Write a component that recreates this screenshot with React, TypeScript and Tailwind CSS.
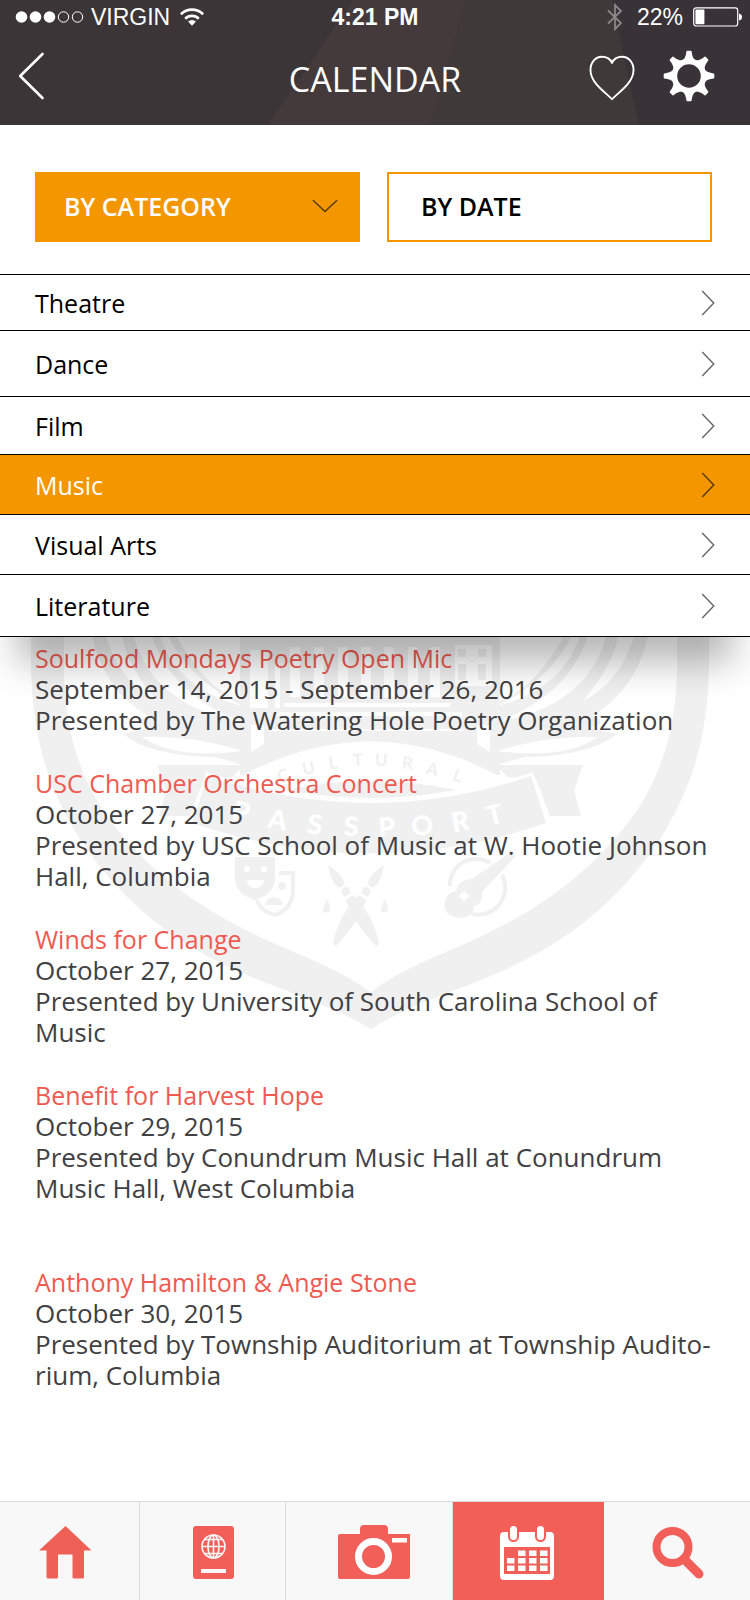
import type { ReactNode } from "react";

type Category = { name: string; height: string };

const categories: Category[] = [
  { name: "Theatre", height: "h-14" },
  { name: "Dance", height: "h-[66px]" },
  { name: "Film", height: "h-[58px]" },
  { name: "Music", height: "h-[60px]" },
  { name: "Visual Arts", height: "h-[60px]" },
  { name: "Literature", height: "h-[62px]" },
];

const events = [
  {
    title: "Soulfood Mondays Poetry Open Mic",
    date: "September 14, 2015 - September 26, 2016",
    lines: ["Presented by The Watering Hole Poetry Organization"],
  },
  {
    title: "USC Chamber Orchestra Concert",
    date: "October 27, 2015",
    lines: ["Presented by USC School of Music at W. Hootie Johnson", "Hall, Columbia"],
  },
  {
    title: "Winds for Change",
    date: "October 27, 2015",
    lines: ["Presented by University of South Carolina School of", "Music"],
  },
  {
    title: "Benefit for Harvest Hope",
    date: "October 29, 2015",
    lines: ["Presented by Conundrum Music Hall at Conundrum", "Music Hall, West Columbia"],
  },
  {
    title: "Anthony Hamilton & Angie Stone",
    date: "October 30, 2015",
    lines: ["Presented by Township Auditorium at Township Audito-", "rium, Columbia"],
  },
];

function HeaderBackdrop() {
  return (
    <svg className="absolute inset-0 h-full w-full" viewBox="0 0 750 125" preserveAspectRatio="none" aria-hidden="true">
      <rect width="750" height="125" fill="#3b3537" />
      <path d="M353 0H466L430 125H268Z" fill="#443a3b" />
      <path d="M466 0H612L639 125H430Z" fill="#3f3939" />
      <path d="M612 0H750V125H639Z" fill="#393237" />
    </svg>
  );
}

function StatusBar() {
  return (
    <div className="grid h-[34px] grid-cols-[1fr_auto_1fr] items-center font-['Liberation_Sans',Arial,sans-serif] text-[23px] leading-[34px]">
      <div className="flex items-center pl-[15px]">
        <svg width="70" height="14" viewBox="0 0 70 14" fill="#fff" aria-hidden="true">
          <circle cx="6.5" cy="7" r="5.8" />
          <circle cx="20.5" cy="7" r="5.8" />
          <circle cx="34.5" cy="7" r="5.8" />
          <circle cx="48.5" cy="7" r="5.2" fill="none" stroke="#fff" />
          <circle cx="62.5" cy="7" r="5.2" fill="none" stroke="#fff" />
        </svg>
        <span className="pl-1.5">VIRGIN</span>
        <svg className="ml-2.5" width="24" height="18" viewBox="0 0 24 18" fill="none" stroke="#fff" strokeWidth="2.7" aria-hidden="true">
          <path d="M.9 6.2a16 16 0 0 1 22.2 0" />
          <path d="M5.2 10.7a9.8 9.8 0 0 1 13.6 0" />
          <path d="M12 17.8 8 13.6a5.8 5.8 0 0 1 8 0Z" fill="#fff" stroke="none" />
        </svg>
      </div>
      <span className="font-bold">4:21 PM</span>
      <div className="flex items-center justify-end pr-[7px]">
        <svg className="mr-3.5" width="16" height="28" viewBox="0 0 16 28" fill="none" stroke="#8d8787" strokeWidth="1.8" aria-hidden="true">
          <path d="M1 7.5 14 20 8 26V2l6 6L1 20.5" />
        </svg>
        <span>22%</span>
        <svg className="ml-2.5" width="50" height="20" viewBox="0 0 50 20" aria-hidden="true">
          <rect x=".7" y=".8" width="44" height="18.2" rx="2.5" fill="none" stroke="#fff" strokeWidth="1.2" />
          <rect x="2.4" y="2.6" width="9" height="14.6" rx="1" fill="#fff" />
          <path d="M46 6.5q3 .5 3 3.5t-3 3.5Z" fill="#fff" />
        </svg>
      </div>
    </div>
  );
}

function GearIcon() {
  const teeth = [0, 45, 90, 135, 180, 225, 270, 315];
  return (
    <svg width="52" height="52" viewBox="-26 -26 52 52" aria-hidden="true">
      <circle r="14.600" fill="none" stroke="#fff" strokeWidth="5.600" />
      {teeth.map((angle) => (
        <path key={angle} transform={`rotate(${angle})`} d="M-6.2-15.8Q-3.4-18-2.6-24.600Q-2.500-25.300-1.800-25.300H1.800Q2.500-25.300 2.600-24.600Q3.400-18 6.200-15.800Z" fill="#fff" />
      ))}
    </svg>
  );
}

function Header() {
  return (
    <header className="relative text-white">
      <HeaderBackdrop />
      <div className="relative">
        <StatusBar />
        <div className="grid h-[91px] grid-cols-[1fr_auto_1fr] items-center pb-2">
          <button type="button" aria-label="Back" className="justify-self-start pl-[18px]">
            <svg width="27" height="48" viewBox="0 0 27 48" fill="none" stroke="#fff" strokeWidth="2.6" strokeLinecap="round" strokeLinejoin="round" aria-hidden="true">
              <path d="M24.5 2 2.2 24l22.3 22" />
            </svg>
          </button>
          <h1 className="pt-1.5 text-[34px] leading-[46px]">CALENDAR</h1>
          <div className="flex items-center justify-end gap-7 pr-[35px]">
            <button type="button" aria-label="Favourites">
              <svg width="46" height="50" viewBox="0 0 46 50" fill="none" stroke="#fff" strokeWidth="1.9" strokeLinejoin="round" aria-hidden="true">
                <path d="M23 48.2C17 41.600 1.900 32.500 1.500 19.500C1.200 11.500 6.500 5.800 12.800 5.800C17.500 5.800 21.500 8.200 23 12C24.500 8.200 28.500 5.800 33.200 5.800C39.500 5.800 44.800 11.500 44.500 19.500C44.100 32.500 29 41.600 23 48.200Z" />
              </svg>
            </button>
            <button type="button" aria-label="Settings">
              <GearIcon />
            </button>
          </div>
        </div>
      </div>
    </header>
  );
}

function Filters() {
  return (
    <div className="grid grid-cols-2 gap-[27px] pt-[47px] pr-[38px] pb-8 pl-[35px] text-[25px] leading-[34px] font-semibold">
      <button type="button" aria-expanded="true" className="flex h-[70px] items-center justify-between bg-[#f39600] pr-[22px] pb-0.5 pl-[29px] text-white">
        BY CATEGORY
        <svg width="26" height="14" viewBox="0 0 26 14" fill="none" stroke="#54390b" strokeWidth="1.4" aria-hidden="true">
          <path d="M1 1.200 13 12.600 25 1.200" />
        </svg>
      </button>
      <button type="button" className="flex h-[70px] items-center border-2 border-[#f39600] pb-0.5 pl-8 text-black">
        BY DATE
      </button>
    </div>
  );
}

function CategoryMenu() {
  return (
    <ul className="relative z-10 border-t border-black bg-white text-[25px] shadow-[0_43px_34px_-17px_rgba(0,0,0,0.28)]">
      {categories.map(({ name, height }) => (
        <li key={name} className={`border-b border-black ${height}`}>
          <button
            type="button"
            className={`flex h-full w-full items-center justify-between pr-[35px] pl-[35px] text-left ${name === "Music" ? "bg-[#f39600] text-white" : "text-black"}`}
          >
            <span className="pt-0.5">{name}</span>
            <svg width="14" height="26" viewBox="0 0 14 26" fill="none" stroke={name === "Music" ? "#54390b" : "#666"} strokeWidth="1.4" aria-hidden="true">
              <path d="M1.200 1 12.800 13 1.200 25" />
            </svg>
          </button>
        </li>
      ))}
    </ul>
  );
}

const cultural: [string, number, number, number][] = [
  ["C", 285, 781, -20], ["U", 310, 774, -13], ["L", 334, 769, -8], ["T", 358, 766, -3],
  ["U", 381, 766, 2], ["R", 407, 769, 7], ["A", 431, 775, 13], ["L", 456, 781, 18],
];

const passport: [string, number, number, number][] = [
  ["P", 239, 821, 14], ["A", 276, 829, 10], ["S", 314, 834, 6], ["S", 351, 836, 2],
  ["P", 387, 837, -2], ["O", 423, 835, -5], ["R", 462, 831, -10], ["T", 497, 824, -14],
];

function Wing() {
  return (
    <g>
      <path d="M92 636Q104 690 148 716Q130 722 150 728L123 734Q150 756 215 757L243 765V702Q206 690 176 636Z" />
      <g fill="#fff">
        <path d="M142 737Q190 735 243 751Q175 760 142 737Z" />
        <path d="M106 636Q118 680 158 702Q128 668 122 636Z" />
        <path d="M134 636Q152 706 243 722Q172 696 152 636Z" />
        <path d="M160 636Q178 690 243 706Q190 680 168 636Z" />
      </g>
      <path d="M157 765H245L232 777L204 779L190 816H159L166 790Z" />
    </g>
  );
}

function CrestWatermark() {
  return (
    <svg className="absolute inset-x-0 top-0 w-full" viewBox="0 637 750 400" fill="#f0f0f0" aria-hidden="true">
      <path fillRule="evenodd" d="M31 636V660C31 735 48 790 82 842C126 908 180 945 240 972C290 994 330 1004 371 1029C410 1004 450 994 500 972C560 945 614 908 658 842C692 790 709 735 709 660V636H677V665C677 730 660 780 630 820C590 872 545 905 490 932C450 952 405 966 371 992C335 966 290 952 250 932C195 905 150 872 110 820C80 780 64 730 64 665V636Z" />
      <Wing />
      <g transform="translate(740 0) scale(-1 1)">
        <Wing />
      </g>

      <path d="M240 636H500V775H240Z" />
      <g fill="#fff">
        <path d="M250 650H268V708H250ZM275 665H280V708H275ZM290 647H300V697H290ZM314 647H324V697H314ZM338 647H348V697H338ZM361 647H371V697H361ZM384 647H394V697H384ZM408 647H418V697H408ZM430 647H440V697H430Z" />
        <path d="M284 703H450V707H284ZM276 712H462V716H276ZM251 725H264V744L251 752ZM477 725H490V752L477 744ZM455 645H492V686H455ZM270 729H464V731H270Z" />
      </g>
      <path d="M458 649H466V657H458ZM478 649H486V657H478ZM458 664H466V680H458ZM478 664H486V680H478Z" />

      <path d="M236 779Q371 704 504 779Q440 805 371 805Q300 805 236 779Z" fill="#fff" />
      <path d="M286 790Q371 772 456 790Q371 806 286 790Z" />
      <path d="M207 774Q371 829 532 774L548 824Q371 886 190 824Z" stroke="#fff" strokeWidth="3" />
      <g textAnchor="middle" className="font-['Lato','Open_Sans',sans-serif] font-bold">
        {cultural.map(([letter, x, y, angle]) => (
          <text key={x} fontSize="17" transform={`translate(${x} ${y}) rotate(${angle})`}>{letter}</text>
        ))}
        <g fill="#fff">
          {passport.map(([letter, x, y, angle]) => (
            <text key={x} fontSize="27" fontWeight="900" transform={`translate(${x} ${y}) rotate(${angle})`}>{letter}</text>
          ))}
        </g>
      </g>

      <path d="M235 857H275V880Q273 895 255 900Q237 895 235 880Z" />
      <g fill="#fff">
        <circle cx="247" cy="869" r="3" />
        <circle cx="264" cy="869" r="3" />
        <path d="M247 880H264Q262 888 255 888Q248 888 247 880Z" />
      </g>
      <path d="M279 873H293V892Q291 910 275 915Q260 911 257 900" fill="none" stroke="#f0f0f0" strokeWidth="4" />
      <circle cx="282" cy="886" r="4" />
      <path d="M265 905Q267 897 274 897Q282 898 283 905Z" />

      <path d="M327 865Q332 867 340 876L344 884 338 888Q329 882 327 865ZM340 890 346 886 350 893 343 897ZM345 900 352 895Q372 914 378 944L375 946Q352 922 345 900Z" transform="translate(1 0)" />
      <path d="M385 865Q380 867 372 876L368 884 374 888Q383 882 385 865ZM372 890 366 886 362 893 369 897ZM367 900 360 895Q340 914 334 944L337 946Q360 922 367 900Z" transform="translate(-1 0)" />
      <path d="M327 899Q331 907 330 911Q327 914 323 911Q323 907 327 899ZM385 899Q388 907 388 911Q385 914 381 911Q381 907 385 899Z" />

      <path d="M450 886A26 26 0 0 1 490 863M502 875A27 27 0 0 1 472 914" fill="none" stroke="#f0f0f0" strokeWidth="4" />
      <path d="M472 879 508 854 516 856 482 892Q484 903 474 906Q475 916 460 918Q442 916 445 901Q448 892 456 891Q458 880 472 879Z" />
      <path d="M464 891 469 896 464 901 459 896Z" fill="#fff" />
    </svg>
  );
}

function EventList() {
  return (
    <section className="relative flex-1">
      <CrestWatermark />
      <ul className="relative flex flex-col gap-8 px-[35px] pt-1.5 pb-16 text-[26px] leading-[31px] text-[#414042]">
        {events.map(({ title, date, lines }) => (
          <li key={title} className="last:pt-[31px]">
            <h2 className="text-[25px] text-[#ee5a50]">{title}</h2>
            <p>{date}</p>
            {lines.map((line) => (
              <p key={line}>{line}</p>
            ))}
          </li>
        ))}
      </ul>
    </section>
  );
}

function Tab({ label, active = false, divided = false, children }: { label: string; active?: boolean; divided?: boolean; children: ReactNode }) {
  return (
    <a
      href={`#${label.toLowerCase()}`}
      aria-label={label}
      aria-current={active ? "page" : undefined}
      className={`flex items-center justify-center ${active ? "bg-[#f25f59]" : "bg-[#f8f8f8]"} ${divided ? "border-r border-[#dcdcdc]" : ""}`}
    >
      <svg width="84" height="60" viewBox="0 0 84 60" fill="#f25f59" aria-hidden="true">
        {children}
      </svg>
    </a>
  );
}

function TabBar() {
  return (
    <nav aria-label="Main" className="grid h-[99px] grid-cols-[140fr_146fr_167fr_151fr_146fr] border-t border-[#dcdcdc]">
      <Tab label="Home" divided>
        <path d="M37.500 5 63.500 29.500H56V56q0 1.500-1.500 1.500H46q-1.500 0-1.500-1.500V33.500H30V56q0 1.500-1.500 1.500H20q-1.500 0-1.500-1.500V29.500H11Z" fill="#ee6055" />
      </Tab>
      <Tab label="Passport" divided>
        <rect x="22" y="5" width="41" height="53" rx="3" />
        <g fill="none" stroke="#f8f8f8" strokeWidth="1.600">
          <circle cx="42.500" cy="25.500" r="11.500" />
          <ellipse cx="42.500" cy="25.500" rx="5.500" ry="11.500" />
          <path d="M42.500 14V37M31 25.500H54M34 18.500H51M34 32.500H51" />
        </g>
        <rect x="30" y="48" width="25" height="4" fill="#f8f8f8" />
      </Tab>
      <Tab label="Camera" divided>
        <path d="M13 13H33V8q0-4 4-4H57q4 0 4 4v5H83V56q0 2-2 2H13q-2 0-2-2V15q0-2 2-2Z" />
        <circle cx="46.500" cy="35.500" r="15" fill="none" stroke="#fff" strokeWidth="7" />
        <rect x="65" y="17" width="15" height="4.500" fill="#fff" />
      </Tab>
      <Tab label="Calendar" active>
        <rect x="13" y="11" width="54" height="48" rx="4" fill="#fff" />
        <rect x="22" y="4" width="9" height="16" rx="4.500" fill="#fff" stroke="#f25f59" strokeWidth="2" />
        <rect x="49" y="4" width="9" height="16" rx="4.500" fill="#fff" stroke="#f25f59" strokeWidth="2" />
        <path d="M17 26H63V53H17Z" />
        <path d="M31 29.500h7.500v5.500H31ZM42 29.500h7.500v5.500H42ZM53 29.500h7.500v5.500H53ZM20 37h7.500v5.500H20ZM31 37h7.500v5.500H31ZM42 37h7.500v5.500H42ZM53 37h7.500v5.500H53ZM20 44.500h7.500V50H20ZM31 44.500h7.500V50H31ZM42 44.500h7.500V50H42ZM53 44.500h7.500V50H53Z" fill="#fff" />
      </Tab>
      <Tab label="Search">
        <circle cx="37.500" cy="26" r="16" fill="none" stroke="#f25f59" strokeWidth="8" />
        <path d="M49 38 64 53" stroke="#f25f59" strokeWidth="9" strokeLinecap="round" />
      </Tab>
    </nav>
  );
}

export default function App() {
  return (
    <div className="flex min-h-screen flex-col bg-white font-['Open_Sans','Noto_Sans',sans-serif]">
      <Header />
      <main className="flex flex-1 flex-col">
        <Filters />
        <CategoryMenu />
        <EventList />
      </main>
      <TabBar />
    </div>
  );
}
